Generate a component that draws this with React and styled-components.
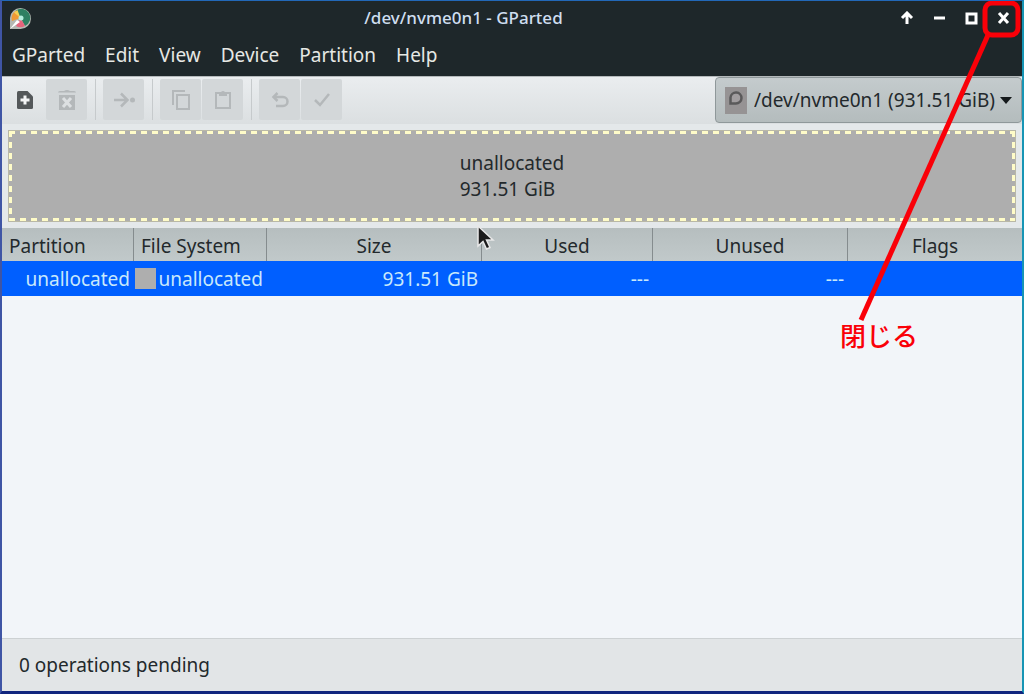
import React from 'react'
import styled, { createGlobalStyle } from 'styled-components'

const GlobalStyle = createGlobalStyle`
    * {
        box-sizing: border-box;
    }

    body {
        margin: 0;
        font-family: "Noto Sans", "Noto Sans CJK JP", sans-serif;
        font-size: 19px;
        color: #23292c;
    }

    button, select {
        font: inherit;
        color: inherit;
        margin: 0;
        padding: 0;
        border: none;
        background: none;
    }
`

const Window = styled.div`
    position: relative;
    display: flex;
    flex-direction: column;
    min-height: 100vh;
    background: #e4e8ea;
    border-style: solid;
    border-width: 1px 2px 3px 2px;
    border-color: #2268b8 #1795b5 #10257e #3f55a5;
`

const TitleBar = styled.header`
    display: flex;
    align-items: center;
    height: 33px;
    padding: 0 7px 0 6px;
    background: #1e272a;
    color: #cfdef0;
`

const Title = styled.h1`
    flex: 1;
    margin: 0;
    font-size: 17px;
    font-weight: 500;
    text-align: center;
`

const WindowButtons = styled.div`
    display: flex;
    justify-content: flex-end;
    gap: 8px;
`

const WindowButton = styled.button`
    display: flex;
    align-items: center;
    justify-content: center;
    width: 24px;
    height: 24px;
    color: #fff;
`

const MenuBar = styled.nav`
    display: flex;
    align-items: flex-start;
    gap: 20px;
    height: 42px;
    padding: 8px 10px 0;
    background: #1e272a;
    color: #e6e8e4;
`

const ToolBar = styled.div`
    display: flex;
    align-items: flex-start;
    height: 48px;
    padding-left: 2px;
    border-top: 1px solid #b4b9bb;
    background: linear-gradient(#eaedef, #dbdfe1);
`

const ToolGroup = styled.div`
    display: flex;
    gap: 1px;
    margin-top: 2px;

    & + & {
        margin-left: 8px;
        padding-left: 7px;
        border-left: 1px solid #c6cacc;
    }
`

const ToolButton = styled.button`
    display: flex;
    align-items: center;
    justify-content: center;
    width: 41px;
    height: 41px;
    border-radius: 2px;
    color: #54585a;

    &:disabled {
        background: #d3d7d9;
        color: #b4b8ba;
    }
`

const DevicePicker = styled.label`
    position: relative;
    display: flex;
    align-items: center;
    height: 46px;
    margin-left: auto;
    padding-left: 9px;
    border: 1px solid #8f989a;
    border-radius: 4px;
    background: linear-gradient(#c4cbcd, #b4bcbd);

    > svg:last-child {
        position: absolute;
        right: 9px;
        pointer-events: none;
    }
`

const DeviceSelect = styled.select`
    appearance: none;
    height: 100%;
    padding: 0 26px 0 7px;
`

const dash = '#fffcc8 0 6px, transparent 6px 11px'

const DiskMap = styled.section`
    display: flex;
    align-items: center;
    justify-content: center;
    height: 92px;
    margin: 6px;
    border: 1px solid #b9b8a6;
    background:
        repeating-linear-gradient(90deg, ${dash}) top / 100% 3px no-repeat,
        repeating-linear-gradient(90deg, ${dash}) bottom / 100% 3px no-repeat,
        repeating-linear-gradient(${dash}) left / 3px 100% no-repeat,
        repeating-linear-gradient(${dash}) right / 3px 100% no-repeat,
        #aeaeae;
    line-height: 26px;

    p {
        margin: 0;
    }
`

const ListPane = styled.main`
    flex: 1;
    background: #f2f5f9;
`

const PartitionTable = styled.table`
    width: 100%;
    table-layout: fixed;
    border-collapse: separate;
    border-spacing: 0;

    col:nth-child(1) { width: 132px; }
    col:nth-child(2) { width: 133px; }
    col:nth-child(3) { width: 215px; }
    col:nth-child(4) { width: 171px; }
    col:nth-child(5) { width: 195px; }
`

const HeaderCell = styled.th`
    height: 33px;
    padding: 2px 7px 0;
    border-right: 1px solid #858c8e;
    background: linear-gradient(#b6bebf, #c1c9ca);
    font-weight: 400;
    text-align: ${props => props.$align || 'center'};

    &:last-child {
        border-right: none;
    }
`

const Cell = styled.td`
    height: 35px;
    padding: 0 4px 0 1px;
    background: #005fff;
    color: #c8e8fb;
    text-align: right;
    white-space: nowrap;
`

const FileSystem = styled.div`
    display: flex;
    align-items: center;
    gap: 3px;
`

const Swatch = styled.span`
    width: 21px;
    height: 21px;
    background: #aeaeae;
`

const StatusBar = styled.footer`
    display: flex;
    align-items: center;
    height: 53px;
    padding: 0 17px;
    border-top: 1px solid #cdd1d3;
    background: #e2e5e7;
`

const Callout = styled.div`
    position: absolute;
    top: 0;
    right: 0;
    width: 184px;
    color: #fa0008;
    pointer-events: none;

    svg {
        display: block;
    }
`

const CalloutText = styled.span`
    display: block;
    padding-left: 2px;
    font-family: "Noto Sans CJK JP", sans-serif;
    font-size: 26px;
    font-weight: 500;
    line-height: 28px;
`

const Pointer = styled.svg`
    position: absolute;
    top: 222px;
    left: 473px;
    pointer-events: none;
`

const Logo = () => (
    <svg width="24" height="24" viewBox="0 0 24 24">
        <path d="M2 23V12A10.500 10.500 0 1 1 12.500 23Z" fill="#b4b8b2" />
        <path d="M12.500 12L8 4.500A9 9 0 1 1 17 20Z" fill="#2e8062" />
        <path d="M12.500 12L4 15A9 9 0 0 1 8 4.500Z" fill="#ef9a35" />
        <path d="M12.500 12L6 6.500L9.500 4Z" fill="#f4cf53" />
        <path d="M12.500 12L17 20A9 9 0 0 1 8 20Z" fill="#e5647c" />
        <path d="M2 23L9 14L12 16Z" fill="#fff" />
        <circle cx="13" cy="12" r="2.500" fill="#b5eede" />
    </svg>
)

const NewIcon = () => (
    <svg width="18" height="20" viewBox="0 0 18 20">
        <path d="M2.500 1H11.500L17 6.500V17.500Q17 19 15.500 19H2.500Q1 19 1 17.500V2.500Q1 1 2.500 1Z" fill="currentColor" />
        <path d="M9 5.500V14.500M4.500 10H13.500" stroke="#f4f5f6" strokeWidth="3" />
    </svg>
)

const DeleteIcon = () => (
    <svg width="20" height="22" viewBox="0 0 20 22">
        <path d="M1 3.500Q1 2 3 2H7Q10 0 13 2H17Q19 2 19 3.500Z" fill="currentColor" />
        <path d="M2 6H18V21H2Z" fill="currentColor" />
        <path d="M6 9L14 18M14 9L6 18" stroke="#dde0e2" strokeWidth="3" />
    </svg>
)

const ResizeIcon = () => (
    <svg width="24" height="18" viewBox="0 0 24 18" fill="none" stroke="currentColor" strokeWidth="2.500">
        <path d="M2 9H15M9 2.500L15.500 9L9 15.500" />
        <circle cx="20.500" cy="9" r="2.500" fill="currentColor" stroke="none" />
    </svg>
)

const CopyIcon = () => (
    <svg width="20" height="22" viewBox="0 0 20 22" fill="none" stroke="currentColor" strokeWidth="2">
        <path d="M2 16V2H14" />
        <path d="M6 6H18V20H6Z" />
    </svg>
)

const PasteIcon = () => (
    <svg width="18" height="20" viewBox="0 0 18 20" fill="none" stroke="currentColor" strokeWidth="2">
        <path d="M2 3H16V18H2Z" />
        <path d="M5 2H7Q9 0 11 2H13V6H5Z" fill="currentColor" stroke="none" />
    </svg>
)

const UndoIcon = () => (
    <svg width="18" height="18" viewBox="0 0 18 18" fill="none" stroke="currentColor" strokeWidth="2.500">
        <path d="M3 6H12A4.500 4.500 0 0 1 12 15H5" />
        <path d="M6.500 2L2.500 6L6.500 10" />
    </svg>
)

const ApplyIcon = () => (
    <svg width="18" height="16" viewBox="0 0 18 16" fill="none" stroke="currentColor" strokeWidth="2.500">
        <path d="M2 8L7 13L16 2" />
    </svg>
)

const DiskIcon = () => (
    <svg width="22" height="27" viewBox="0 0 22 27">
        <path d="M0 0H22V27H0Z" fill="#969394" />
        <path d="M5.500 16.500V10.500A5.500 5.500 0 1 1 11 16.500Z" fill="#a19d9f" stroke="#5a595a" strokeWidth="2.500" />
    </svg>
)

const menus = ['GParted', 'Edit', 'View', 'Device', 'Partition', 'Help']

const tools = [
    [
        { label: 'New', icon: <NewIcon />, enabled: true },
        { label: 'Delete', icon: <DeleteIcon /> },
    ],
    [{ label: 'Resize/Move', icon: <ResizeIcon /> }],
    [
        { label: 'Copy', icon: <CopyIcon /> },
        { label: 'Paste', icon: <PasteIcon /> },
    ],
    [
        { label: 'Undo', icon: <UndoIcon /> },
        { label: 'Apply', icon: <ApplyIcon /> },
    ],
]

const windowControls = [
    { label: 'Roll up', path: 'M7 13V3M2 7L7 2L12 7' },
    { label: 'Minimize', path: 'M2 7H13' },
    { label: 'Maximize', path: 'M3 3H12V12H3Z' },
    { label: 'Close', path: 'M3 2L12 12M12 2L3 12' },
]

const App = () => (
    <>
        <GlobalStyle />
        <Window>
            <TitleBar>
                <Logo />
                <Title>/dev/nvme0n1 - GParted</Title>
                <WindowButtons>
                    {windowControls.map(control => (
                        <WindowButton key={control.label} aria-label={control.label}>
                            <svg width="14" height="14" viewBox="0 0 14 14">
                                <path d={control.path} fill="none" stroke="currentColor" strokeWidth="3" />
                            </svg>
                        </WindowButton>
                    ))}
                </WindowButtons>
            </TitleBar>
            <MenuBar>
                {menus.map(menu => <button key={menu}>{menu}</button>)}
            </MenuBar>
            <ToolBar>
                {tools.map(group => (
                    <ToolGroup key={group[0].label}>
                        {group.map(tool => (
                            <ToolButton key={tool.label} aria-label={tool.label} disabled={!tool.enabled}>
                                {tool.icon}
                            </ToolButton>
                        ))}
                    </ToolGroup>
                ))}
                <DevicePicker>
                    <DiskIcon />
                    <DeviceSelect aria-label="Device">
                        <option>/dev/nvme0n1 (931.51 GiB)</option>
                    </DeviceSelect>
                    <svg width="12" height="7" viewBox="0 0 12 7">
                        <path d="M0 0H12L6 7Z" fill="#14191b" />
                    </svg>
                </DevicePicker>
            </ToolBar>
            <DiskMap>
                <div>
                    <p>unallocated</p>
                    <p>931.51 GiB</p>
                </div>
            </DiskMap>
            <ListPane>
                <PartitionTable>
                    <colgroup>
                        <col /><col /><col /><col /><col /><col />
                    </colgroup>
                    <thead>
                        <tr>
                            <HeaderCell $align="left">Partition</HeaderCell>
                            <HeaderCell $align="left">File System</HeaderCell>
                            <HeaderCell>Size</HeaderCell>
                            <HeaderCell>Used</HeaderCell>
                            <HeaderCell>Unused</HeaderCell>
                            <HeaderCell>Flags</HeaderCell>
                        </tr>
                    </thead>
                    <tbody>
                        <tr>
                            <Cell>unallocated</Cell>
                            <Cell>
                                <FileSystem>
                                    <Swatch />
                                    unallocated
                                </FileSystem>
                            </Cell>
                            <Cell>931.51 GiB</Cell>
                            <Cell>---</Cell>
                            <Cell>---</Cell>
                            <Cell />
                        </tr>
                    </tbody>
                </PartitionTable>
            </ListPane>
            <StatusBar>0 operations pending</StatusBar>
            <Callout>
                <svg width="184" height="320" viewBox="0 0 184 320" fill="none" stroke="currentColor">
                    <rect x="147" y="2" width="33" height="32" rx="7" strokeWidth="5" />
                    <path d="M150 34L23 319" strokeWidth="5" />
                </svg>
                <CalloutText>閉じる</CalloutText>
            </Callout>
            <Pointer width="20" height="28" viewBox="0 0 20 28">
                <path d="M3 3V23L8 18.500L11.500 26L15 24.500L11.500 17H18Z" fill="#1c1c1c" stroke="#e8e8e8" strokeWidth="1.500" />
            </Pointer>
        </Window>
    </>
)

export default App
